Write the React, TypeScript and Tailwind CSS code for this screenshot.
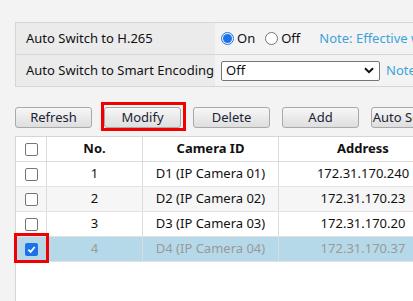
import React from "react";

const rows = [
  { no: 1, id: "D1 (IP Camera 01)", addr: "172.31.170.240" },
  { no: 2, id: "D2 (IP Camera 02)", addr: "172.31.170.23" },
  { no: 3, id: "D3 (IP Camera 03)", addr: "172.31.170.20" },
  { no: 4, id: "D4 (IP Camera 04)", addr: "172.31.170.37", selected: true },
];

function Box({ checked }: { checked?: boolean }) {
  if (checked) {
    return (
      <span className="flex h-[13px] w-[13px] items-center justify-center rounded-[2px] bg-[#1a73e8]">
        <svg width="9" height="9" viewBox="0 0 10 10">
          <path d="M1.5 5.2 L4 7.6 L8.6 2.2" fill="none" stroke="white" strokeWidth="2" />
        </svg>
      </span>
    );
  }
  return <span className="block h-[13px] w-[13px] rounded-[2px] border border-[#767676] bg-white" />;
}

function Btn({ label, red }: { label: string; red?: boolean }) {
  return (
    <div className="relative">
      <button className="h-[21px] w-[77px] rounded-[3px] border border-[#a9a9a9] bg-gradient-to-b from-[#f7f7f7] to-[#dedede] text-[13px] leading-none text-[#1b2335]">
        {label}
      </button>
      {red && (
        <span className="pointer-events-none absolute left-[-3px] top-[-5px] h-[29px] w-[85px] border-[3px] border-[#f00000]" />
      )}
    </div>
  );
}

export default function App() {
  return (
    <div
      className="h-[301px] w-[413px] overflow-hidden bg-[#f3f3f4] pl-[15px] pt-[22px] text-[13px] text-[#111]"
      style={{ fontFamily: '"Noto Sans", "Liberation Sans", sans-serif' }}
    >
      <div className="w-[500px] border border-[#d6d6d6]">
        <div className="flex h-[32px] border-b border-[#d6d6d6]">
          <div className="flex w-[199px] items-center bg-[#ebebeb] pl-[10px]">Auto Switch to H.265</div>
          <div className="flex items-center pl-[6px]">
            <span className="flex h-[13px] w-[13px] items-center justify-center rounded-full border border-[#1a73e8]">
              <span className="h-[9px] w-[9px] rounded-full bg-[#1a73e8]" />
            </span>
            <span className="ml-[3px]">On</span>
            <span className="ml-[10px] h-[13px] w-[13px] rounded-full border border-[#767676] bg-white" />
            <span className="ml-[3px]">Off</span>
            <span className="ml-[19px] text-[#3ca3d8]">Note: Effective when</span>
          </div>
        </div>
        <div className="flex h-[31px]">
          <div className="flex w-[199px] items-center bg-[#ebebeb] pl-[10px]">Auto Switch to Smart Encoding</div>
          <div className="flex items-center pl-[6px]">
            <div className="flex h-[20px] w-[159px] items-center justify-between rounded-[2px] border border-[#767676] bg-white pl-[4px] pr-[5px]">
              <span>Off</span>
              <svg width="10" height="7" viewBox="0 0 10 7">
                <path d="M1 1.2 L5 5.2 L9 1.2" fill="none" stroke="#111" strokeWidth="2" />
              </svg>
            </div>
            <span className="ml-[6px] text-[#3ca3d8]">Note</span>
          </div>
        </div>
      </div>

      <div className="mt-[20px] flex gap-[12px]">
        <Btn label="Refresh" />
        <Btn label="Modify" red />
        <Btn label="Delete" />
        <Btn label="Add" />
        <Btn label="Auto Search" />
      </div>

      <div className="mt-[8px] h-[200px] w-[500px] border-l border-t border-[#d6d6d6] bg-white">
        <div className="flex h-[25px] border-b border-[#dcdcdc] font-bold">
          <div className="flex w-[31px] items-center justify-center border-r border-[#dcdcdc]">
            <Box />
          </div>
          <div className="flex w-[96px] items-center justify-center border-r border-[#dcdcdc]">No.</div>
          <div className="flex w-[136px] items-center justify-center border-r border-[#dcdcdc]">Camera ID</div>
          <div className="flex w-[168px] items-center justify-center">Address</div>
        </div>
        {rows.map((r) => (
          <div
            key={r.no}
            className={
              "flex h-[25px] border-b border-[#e2e2e2] " +
              (r.selected ? "bg-[#b5d9e8] text-[#9a9a9a]" : r.no === 2 ? "bg-[#f6f6f6]" : "bg-white")
            }
          >
            <div className="relative flex w-[31px] items-center justify-center border-r border-[#dcdcdc]">
              <Box checked={r.selected} />
              {r.selected && (
                <span className="pointer-events-none absolute left-[-2px] top-[-4px] h-[30px] w-[35px] border-[3px] border-[#f00000]" />
              )}
            </div>
            <div className="flex w-[96px] items-center justify-center border-r border-[#dcdcdc]">{r.no}</div>
            <div className="flex w-[136px] items-center justify-center border-r border-[#dcdcdc]">{r.id}</div>
            <div className="flex w-[168px] items-center justify-center">{r.addr}</div>
          </div>
        ))}
      </div>
    </div>
  );
}
